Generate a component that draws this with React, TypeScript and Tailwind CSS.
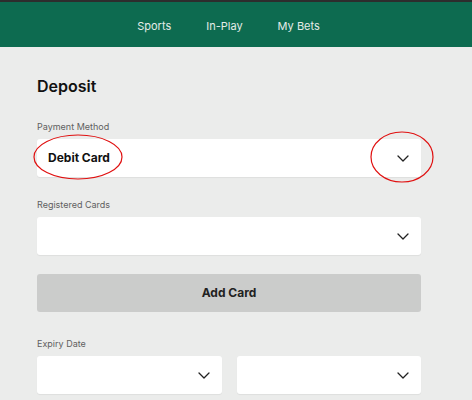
const Chevron = () => (
  <svg width="12" height="7" viewBox="0 0 12 7" fill="none" className="shrink-0">
    <path d="M1 1l5 5 5-5" stroke="#222" strokeWidth="1.3" strokeLinecap="round" strokeLinejoin="round" />
  </svg>
);

const Select = ({ value, className = "" }: { value?: string; className?: string }) => (
  <div className={`h-[38px] bg-white rounded-[3px] shadow-[0_1px_1px_rgba(0,0,0,0.06)] flex items-center justify-between pl-[11px] pr-[12px] ${className}`}>
    <span className="text-[12px] font-bold text-[#111]">{value}</span>
    <Chevron />
  </div>
);

const Label = ({ children }: { children: string }) => (
  <div className="text-[9px] text-[#5f5f5f] leading-none mb-[8px]">{children}</div>
);

export default function App() {
  return (
    <div className="w-[472px] h-[400px] overflow-hidden bg-[#ebeceb] relative" style={{ fontFamily: "Inter, 'Liberation Sans', sans-serif" }}>
      <div className="h-[2px] bg-[#2d2d2d]" />
      <nav className="h-[45px] bg-[#0d6b50] flex items-center justify-center gap-[35px] pr-[15px] pt-[3px]">
        <span className="text-[11px] text-[#e4ebe8]">Sports</span>
        <span className="text-[11px] text-[#e4ebe8]">In-Play</span>
        <span className="text-[11px] text-[#e4ebe8]">My Bets</span>
      </nav>
      <div className="pl-[37px] pr-[51px] pt-[31px]">
        <h1 className="text-[16px] font-semibold text-[#111] leading-none">Deposit</h1>
        <div className="mt-[28px]">
          <Label>Payment Method</Label>
          <Select value="Debit Card" />
        </div>
        <div className="mt-[23px]">
          <Label>Registered Cards</Label>
          <Select />
        </div>
        <button className="mt-[19px] w-full h-[38px] bg-[#cbcccb] rounded-[3px] text-[12px] font-bold text-[#222]">
          Add Card
        </button>
        <div className="mt-[27px]">
          <Label>Expiry Date</Label>
          <div className="flex gap-[15px]">
            <Select className="flex-1" />
            <Select className="flex-1" />
          </div>
        </div>
      </div>
      <svg className="absolute left-0 top-0 pointer-events-none" width="472" height="400">
        <ellipse cx="78" cy="157" rx="44" ry="22" fill="none" stroke="#e01010" strokeWidth="1.2" />
        <ellipse cx="402" cy="157" rx="31" ry="25" fill="none" stroke="#e01010" strokeWidth="1.2" />
      </svg>
    </div>
  );
}
